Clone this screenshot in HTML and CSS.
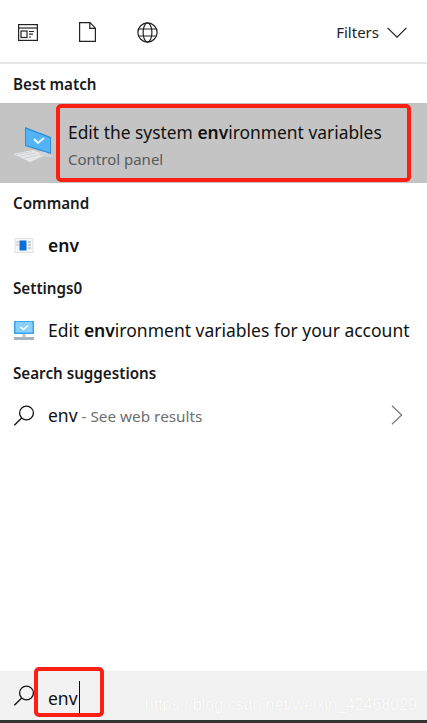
FILE: index.html
```html
<!DOCTYPE html>
<html lang="en">
<head>
  <meta charset="UTF-8">
  <meta name="viewport" content="width=device-width, initial-scale=1.0">
  <title>Search</title>
  <link rel="stylesheet" href="styles.css">
</head>
<body>
  <div class="panel">
    <div class="toolbar">
      <div class="tabs">
        <svg class="tab-icon" width="20" height="17" viewBox="0 0 20 17" fill="none" stroke="#222" stroke-width="1.2">
          <rect x="0.6" y="0.6" width="18.8" height="15.8"/>
          <path d="M1 4h18"/>
          <rect x="3" y="7" width="6" height="6.5"/>
          <path d="M11 7.5h5M11 10.2h4M11 13h2"/>
        </svg>
        <svg class="tab-icon" width="17" height="20" viewBox="0 0 17 20" fill="none" stroke="#222" stroke-width="1.2">
          <path d="M0.6 0.6h10.4l5.4 5.6v13.2H0.6z"/>
          <path d="M10.8 0.8v5.6h5.4"/>
        </svg>
        <svg class="tab-icon" width="21" height="21" viewBox="0 0 21 21" fill="none" stroke="#222" stroke-width="1.2">
          <circle cx="10.5" cy="10.5" r="9.6"/>
          <ellipse cx="10.5" cy="10.5" rx="4.4" ry="9.6"/>
          <path d="M1.6 7h17.8M1.6 14h17.8"/>
        </svg>
      </div>
      <div class="filters">
        <span>Filters</span>
        <svg width="20" height="11" viewBox="0 0 20 11" fill="none" stroke="#222" stroke-width="1.2"><path d="M0.6 0.8l9.4 9.4 9.4-9.4"/></svg>
      </div>
    </div>

    <div class="section-label first">Best match</div>
    <div class="best-match">
      <svg class="pc-icon" width="40" height="38" viewBox="0 0 40 38">
        <path d="M0 28l20-4 13 5-16 7z" fill="#e6e8e8"/>
        <path d="M3 28.500l16-3M6 30.500l16-3.500M10 32.500l15-3.500" stroke="#c9cdce" stroke-width="0.8" fill="none"/>
        <path d="M28 23l6 1.500v3.500l8 2-7 1-9-2z" fill="#d2d5d6"/>
        <path d="M12 1l26 10v17l-26-8z" fill="#2d8fd8"/>
        <path d="M13 3l24 9v14.500l-24-7.500z" fill="#53b3f4"/>
        <path d="M21 13l4 4 6-5" fill="none" stroke="#eaf6ff" stroke-width="2"/>
      </svg>
      <div class="best-text">
        <div class="best-title">Edit the system <b>env</b>ironment variables</div>
        <div class="best-sub">Control panel</div>
      </div>
      <div class="red-box best-box"></div>
    </div>

    <div class="section-label command">Command</div>
    <div class="row">
      <svg class="row-icon" width="19" height="15" viewBox="0 0 19 15">
        <rect width="19" height="15" fill="#dfe3e6"/>
        <rect x="1" y="1" width="17" height="13" fill="#f6f7f8"/>
        <rect x="5" y="2.500" width="7" height="10" fill="#0b6fd6"/>
        <path d="M13.500 4h3M13.500 7h3M13.500 10h3M2 4h2M2 7h2" stroke="#9aa3aa" stroke-width="1"/>
      </svg>
      <span class="row-text"><b class="mid">env</b></span>
    </div>

    <div class="section-label settings">Settings0</div>
    <div class="row">
      <svg class="row-icon" width="20" height="19" viewBox="0 0 20 19">
        <rect width="20" height="13" fill="#35a4ec"/>
        <rect x="1.500" y="1" width="17" height="10.500" fill="#8bd0f8"/>
        <path d="M6.500 6l3 2.500 4.500-4" fill="none" stroke="#fff" stroke-width="1.600"/>
        <rect x="8.500" y="13" width="3" height="3" fill="#b9c4cc"/>
        <rect y="16" width="20" height="3" fill="#a8b4bc"/>
      </svg>
      <span class="row-text">Edit <b class="mid">env</b>ironment variables for your account</span>
    </div>

    <div class="section-label suggestions">Search suggestions</div>
    <div class="row">
      <svg class="row-icon" width="21" height="21" viewBox="0 0 21 21" fill="none" stroke="#111" stroke-width="1.300">
        <circle cx="13" cy="8" r="6.900"/>
        <path d="M8.200 13L0.800 20.300"/>
      </svg>
      <span class="row-text">env<span class="muted"> - See web results</span></span>
      <svg class="chevron" width="12" height="20" viewBox="0 0 12 20" fill="none" stroke="#777" stroke-width="1.200"><path d="M1 0.800l9.600 9.200-9.600 9.200"/></svg>
    </div>

    <div class="spacer"></div>

    <div class="search-bar">
      <svg class="row-icon" width="21" height="21" viewBox="0 0 21 21" fill="none" stroke="#111" stroke-width="1.300">
        <circle cx="13" cy="8" r="6.900"/>
        <path d="M8.200 13L0.800 20.300"/>
      </svg>
      <span class="row-text search-text">env</span><span class="caret"></span>
      <div class="red-box search-box"></div>
      <div class="watermark">https://blog.csdn.net/weixin_42468029</div>
    </div>
    <div class="taskbar-edge"></div>
  </div>
</body>
</html>
```

FILE: styles.css
```css
* {
  box-sizing: border-box;
}
body {
  margin: 0;
  background-color: #ffffff;
  font-family: "Noto Sans", "Open Sans", sans-serif;
  color: #111;
}
.panel {
  width: 427px;
  height: 723px;
  display: flex;
  flex-direction: column;
  overflow: hidden;
}
.toolbar {
  height: 64px;
  padding: 2px 20px 0 18px;
  border-bottom: 2px solid #e6e6e6;
  display: flex;
  align-items: center;
  justify-content: space-between;
}
.tabs {
  display: flex;
  align-items: center;
  gap: 41px;
}
.tab-icon {
  display: block;
}
.filters {
  display: flex;
  align-items: center;
  gap: 8px;
  font-size: 15px;
  color: #222;
}
.section-label {
  margin-top: 16px;
  padding-left: 13px;
  font-size: 15.200px;
  line-height: 20px;
  font-weight: 600;
  color: #1a1a1a;
}
.first {
  margin-top: 10px;
  margin-bottom: 9px;
}
.command {
  margin-top: 10px;
}
.settings {
  margin-top: 17px;
}
.suggestions {
  margin-top: 17px;
}
.best-match {
  position: relative;
  height: 80px;
  background-color: #c4c4c4;
  display: flex;
  align-items: center;
}
.pc-icon {
  margin-left: 13px;
  margin-top: 3px;
  flex: none;
}
.best-text {
  margin-left: 15px;
  padding-top: 2px;
}
.best-title {
  font-size: 17.400px;
  line-height: 24px;
  color: #111;
}
.best-title b {
  font-weight: 600;
}
.best-sub {
  margin-top: 5px;
  font-size: 15px;
  line-height: 20px;
  color: #5a5a5a;
}
.red-box {
  position: absolute;
  border: 4px solid #fb1f14;
  border-radius: 5px;
}
.best-box {
  left: 56px;
  top: 1px;
  width: 355px;
  height: 78px;
}
.row {
  height: 32px;
  margin-top: 16px;
  padding-left: 13px;
  display: flex;
  align-items: center;
  position: relative;
}
.row-icon {
  flex: none;
  width: 22px;
}
.row-text {
  margin-left: 13px;
  font-size: 17.500px;
  white-space: nowrap;
}
.mid {
  font-weight: 600;
}
.muted {
  font-size: 15.300px;
  color: #6e6e6e;
}
.chevron {
  position: absolute;
  right: 24px;
  top: 6px;
}
.spacer {
  flex: 1;
}
.search-bar {
  position: relative;
  height: 49px;
  background-color: #f2f2f2;
  padding-left: 13px;
  display: flex;
  align-items: center;
}
.search-text {
  margin-top: 5px;
}
.caret {
  width: 1px;
  height: 34px;
  margin-top: 5px;
  margin-left: 1px;
  background-color: #111;
}
.search-box {
  left: 34px;
  top: -4px;
  width: 70px;
  height: 50px;
}
.watermark {
  position: absolute;
  right: 10px;
  bottom: 6px;
  font-family: "Liberation Sans", sans-serif;
  font-size: 16px;
  color: #fbfbfb;
  text-shadow: 0 0 1px #dcdcdc;
  white-space: nowrap;
}
.taskbar-edge {
  height: 3px;
  background-color: #333;
}
```
